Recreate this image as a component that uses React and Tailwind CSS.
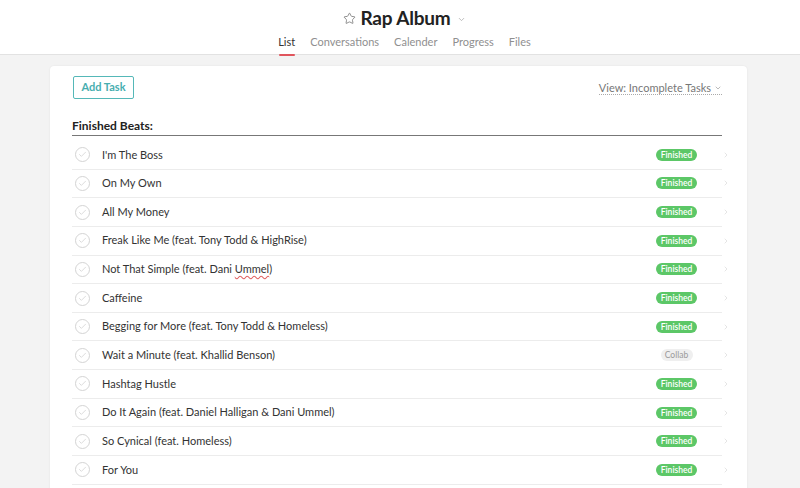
import React from 'react';
import { Star, ChevronDown, ChevronRight, Check } from 'lucide-react';

const tasks = [
  { name: "I'm The Boss", tag: 'Finished' },
  { name: 'On My Own', tag: 'Finished' },
  { name: 'All My Money', tag: 'Finished' },
  { name: 'Freak Like Me (feat. Tony Todd & HighRise)', tag: 'Finished' },
  { name: 'Not That Simple (feat. Dani ', typo: 'Ummel', after: ')', tag: 'Finished' },
  { name: 'Caffeine', tag: 'Finished' },
  { name: 'Begging for More (feat. Tony Todd & Homeless)', tag: 'Finished' },
  { name: 'Wait a Minute (feat. Khallid Benson)', tag: 'Collab' },
  { name: 'Hashtag Hustle', tag: 'Finished' },
  { name: 'Do It Again (feat. Daniel Halligan & Dani Ummel)', tag: 'Finished' },
  { name: 'So Cynical (feat. Homeless)', tag: 'Finished' },
  { name: 'For You', tag: 'Finished' },
];

const tabs = ['List', 'Conversations', 'Calender', 'Progress', 'Files'];

const TaskRow = ({ task }) => (
  <div className="flex items-center h-[28.65px] border-b border-[#ececec]">
    <div className="w-[15px] h-[15px] ml-[3px] rounded-full border border-[#d4d4d4] flex items-center justify-center">
      <Check className="w-[9px] h-[9px] text-[#d0d0d0]" strokeWidth={2} />
    </div>
    <span className="ml-[12px] text-[11px] text-[#333]">
      {task.name}
      {task.typo && <span className="underline decoration-wavy decoration-[#e06060] underline-offset-2">{task.typo}</span>}
      {task.after}
    </span>
    <div className="ml-auto w-[41px] flex justify-center">
      {task.tag === 'Finished' ? (
        <span className="h-[12px] w-[41px] rounded-full bg-[#5cc767] text-white text-[8.5px] leading-[12px] text-center font-semibold">Finished</span>
      ) : (
        <span className="h-[12px] w-[32px] rounded-full bg-[#efefef] text-[#9a9a9a] text-[8.5px] leading-[12px] text-center">Collab</span>
      )}
    </div>
    <ChevronRight className="w-[8px] h-[8px] text-[#d8d8d8] ml-[25px] -mr-[8px]" strokeWidth={2} />
  </div>
);

export default function App() {
  return (
    <div className="w-[800px] h-[488px] overflow-hidden bg-[#f3f3f3] font-['Lato',sans-serif]">
      <header className="bg-white h-[55px] border-b border-[#e2e2e2] flex flex-col items-center">
        <div className="flex items-center mt-[5px] h-[26px] ml-[8px]">
          <Star className="w-[13px] h-[13px] text-[#777] mr-[5px]" strokeWidth={1.5} />
          <span className="text-[19px] font-bold text-[#222] tracking-[-0.2px]">Rap Album</span>
          <ChevronDown className="w-[9px] h-[9px] text-[#aaa] ml-[6px] mt-[3px]" strokeWidth={2} />
        </div>
        <nav className="flex items-start gap-[15px] mt-[3px] ml-[9px] text-[11px] text-[#8f8f8f]">
          {tabs.map((t, i) => (
            <div key={t} className="flex flex-col items-center">
              <span className={i === 0 ? 'text-[#333]' : ''}>{t}</span>
              {i === 0 && <div className="w-[16px] h-[2px] bg-[#e0555d] mt-[3px] rounded-full" />}
            </div>
          ))}
        </nav>
      </header>

      <main className="mt-[11px] ml-[50px] w-[697px] bg-white rounded-[4px] shadow-[0_0_2px_rgba(0,0,0,0.08)] pt-[10px] pl-[22px] pr-[25px] h-[450px]">
        <div className="flex items-center justify-between">
          <button className="ml-[1px] h-[23px] w-[61px] border border-[#55b8b8] rounded-[2px] text-[11px] font-bold text-[#47aeb0]">Add Task</button>
          <div className="flex items-center mt-[1px] text-[11px] text-[#777] border-b border-dotted border-[#aaa] leading-[13px]">
            View: Incomplete Tasks
            <ChevronDown className="w-[8px] h-[8px] ml-[3px] text-[#999]" strokeWidth={2} />
          </div>
        </div>
        <div className="mt-[20px] text-[12px] font-bold text-[#222] leading-[14px] pb-[2px] border-b border-[#777]">Finished Beats:</div>
        <div className="mt-[5px]">
          {tasks.map((t) => <TaskRow key={t.name} task={t} />)}
        </div>
      </main>
    </div>
  );
}
